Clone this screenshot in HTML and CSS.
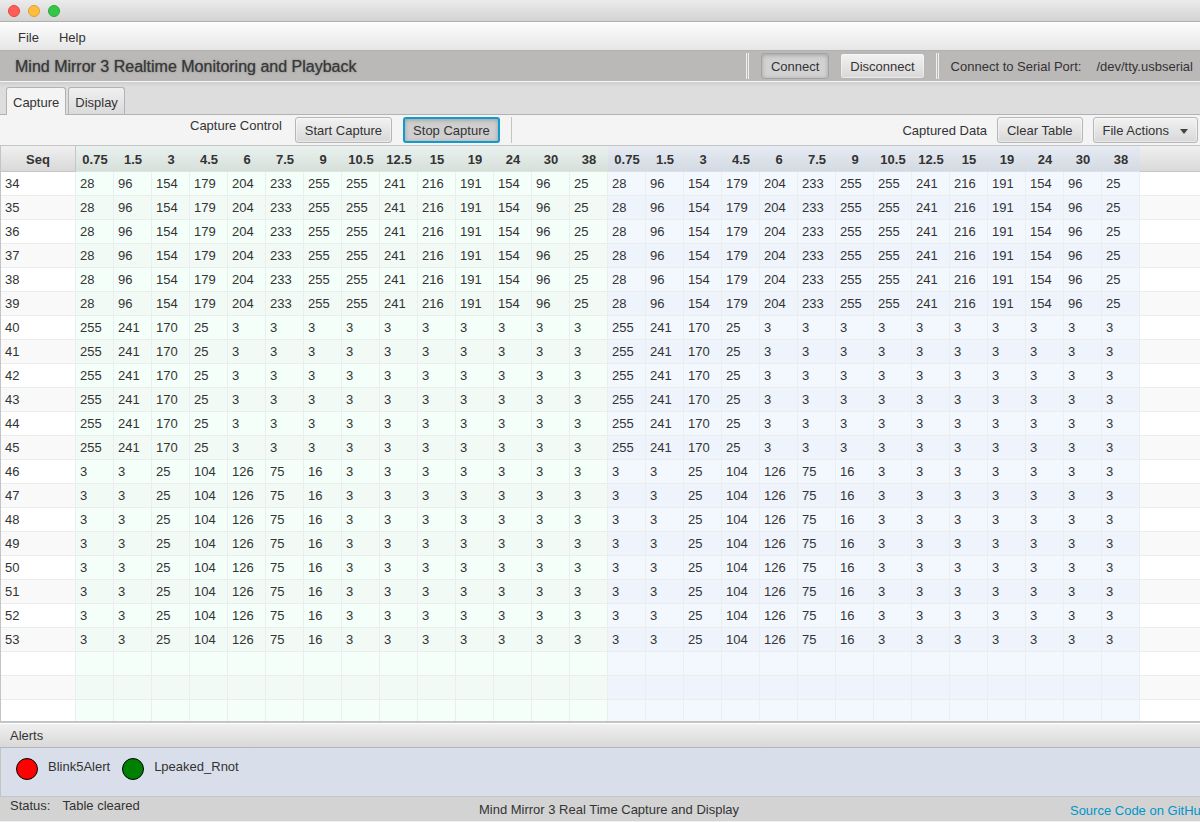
FILE: index.html
```html
<!DOCTYPE html>
<html lang="en">
<head>
<meta charset="utf-8">
<title>Mind Mirror 3</title>
<link rel="stylesheet" href="styles.css">
</head>
<body>
<div class="window">
  <div class="titlebar">
    <button class="light light-close" aria-label="Close"></button>
    <button class="light light-min" aria-label="Minimize"></button>
    <button class="light light-zoom" aria-label="Zoom"></button>
  </div>
  <nav class="menubar">
    <button class="menu">File</button>
    <button class="menu">Help</button>
  </nav>
  <header class="toolbar">
    <h1 class="app-title">Mind Mirror 3 Realtime Monitoring and Playback</h1>
    <div class="toolbar-group">
      <span class="divider"></span>
      <button class="btn btn-pressed">Connect</button>
      <button class="btn">Disconnect</button>
      <span class="divider"></span>
      <span class="port-label">Connect to Serial Port:</span>
      <span class="port-name">/dev/tty.usbserial</span>
    </div>
  </header>
  <div class="tabs" role="tablist">
    <button class="tab tab-active" role="tab" aria-selected="true">Capture</button>
    <button class="tab" role="tab" aria-selected="false">Display</button>
  </div>
  <div class="controls">
    <div class="control-group">
      <span class="control-label">Capture Control</span>
      <button class="btn">Start Capture</button>
      <button class="btn btn-pressed btn-focus">Stop Capture</button>
      <span class="rule"></span>
    </div>
    <div class="data-group">
      <span>Captured Data</span>
      <button class="btn">Clear Table</button>
      <button class="btn btn-menu">File Actions
        <svg class="arrow" viewBox="0 0 8 5"><path d="M0 0H8L4 5Z"/></svg>
      </button>
    </div>
  </div>
  <main class="table-area">
    <table class="grid">
      <colgroup id="cols"><col class="col-seq"></colgroup>
      <thead><tr id="head"><th class="seq">Seq</th></tr></thead>
      <tbody id="rows"></tbody>
    </table>
  </main>
  <section class="alerts">
    <h2 class="alerts-title">Alerts</h2>
    <div class="alerts-body">
      <span class="dot dot-red"></span><span class="alert-name">Blink5Alert</span>
      <span class="dot dot-green"></span><span class="alert-name">Lpeaked_Rnot</span>
    </div>
  </section>
  <footer class="status">
    <div class="status-left"><span>Status:</span><span>Table cleared</span></div>
    <span class="status-mid">Mind Mirror 3 Real Time Capture and Display</span>
    <a class="source" href="#">Source Code on GitHub</a>
  </footer>
</div>
<script src="table.js"></script>
</body>
</html>
```
FILE: styles.css
```css
* { box-sizing: border-box; }
body {
  margin: 0;
  font-family: "Liberation Sans", Arial, sans-serif;
  font-size: 13px;
  line-height: 16px;
  color: #333;
}
button { font: inherit; color: inherit; margin: 0; }
.window {
  display: flex;
  flex-direction: column;
  height: 100vh;
  overflow: hidden;
  background: #f4f4f4;
  border-bottom: 1px solid #efefef;
}
.titlebar {
  display: flex;
  align-items: center;
  gap: 8px;
  flex: none;
  height: 22px;
  padding-left: 8px;
  background: linear-gradient(#ebebeb, #d3d3d3);
  border-bottom: 1px solid #b0b0b0;
}
.light {
  width: 12px;
  height: 12px;
  padding: 0;
  border: 1px solid #e2463f;
  border-radius: 50%;
  background: #ff5f57;
}
.light-min { background: #ffbd3e; border-color: #dfa033; }
.light-zoom { background: #33c748; border-color: #27aa35; }
.menubar {
  display: flex;
  flex: none;
  height: 28px;
  padding: 3px 10px 0;
  background: linear-gradient(#fdfdfd, #e6e6e6);
}
.menu { padding: 0 8px; margin-right: 4px; border: 0; background: none; }
.toolbar {
  display: flex;
  align-items: center;
  flex: none;
  height: 32px;
  padding-left: 15px;
  white-space: nowrap;
  background: #bbb8b8;
  border-top: 1px solid #b3b0b0;
  border-bottom: 1px solid #f6f6f6;
}
.app-title {
  margin: 0;
  padding-top: 2px;
  font-size: 16px;
  line-height: 20px;
  font-weight: 400;
  color: #383838;
  text-shadow: 0 0 1px #666, 0 0 3px #999;
}
.toolbar-group { display: flex; align-items: center; margin-left: auto; padding-right: 7px; }
.divider {
  width: 3px;
  height: 26px;
  margin-right: 12px;
  border-left: 1px solid #f0f0f0;
  border-right: 1px solid #f0f0f0;
}
.toolbar .btn { margin-right: 11px; }
.port-label { margin-right: 15px; padding-top: 2px; }
.port-name { padding-top: 2px; }
.btn {
  height: 26px;
  padding: 2px 9px 0;
  white-space: nowrap;
  border: 1px solid #b6b6b6;
  border-radius: 3px;
  background: linear-gradient(#f2f2f2, #d8d8d8);
  box-shadow: inset 0 0 0 1px rgba(255, 255, 255, .45);
}
.btn-pressed {
  background: #d2d2d2;
  border-color: #a3a3a3;
  box-shadow: inset 0 1px 4px rgba(0, 0, 0, .25);
}
.btn-focus {
  background: #cfcfcf;
  border: 2px solid #0f9bd0;
  padding: 2px 8px 0;
}
.tabs {
  display: flex;
  align-items: flex-end;
  gap: 2px;
  flex: none;
  height: 33px;
  padding-left: 6px;
  background: linear-gradient(#cecece, #dddddd 5px);
  border-bottom: 1px solid #b2b2b2;
}
.tab {
  height: 27px;
  padding: 4px 6px 0;
  border: 1px solid #b2b2b2;
  border-bottom: 0;
  border-radius: 3px 3px 0 0;
  background: linear-gradient(#f0f0f0, #dadada);
}
.tab-active {
  height: 28px;
  padding-top: 3px;
  margin-bottom: -1px;
  background: #f4f4f4;
}
.controls {
  display: flex;
  justify-content: space-between;
  flex: none;
  height: 30px;
  padding: 2px 2px 2px 190px;
}
.control-group { display: flex; gap: 11px; }
.control-label { padding-top: 1px; margin-right: 2px; }
.rule { width: 1px; background: #c3c3c3; }
.data-group { display: flex; align-items: center; gap: 10px; }
.data-group span { padding-top: 2px; }
.btn-menu { display: flex; align-items: center; gap: 11px; }
.arrow { width: 8px; height: 5px; fill: #444; }
.table-area {
  flex: 1;
  min-height: 0;
  overflow: hidden;
  background: #fff;
  border: solid #c4c4c4;
  border-width: 1px 0 2px 1px;
}
.grid {
  width: 100%;
  table-layout: fixed;
  border-collapse: separate;
  border-spacing: 0;
}
.col-seq { width: 75px; }
.col-band { width: 38px; }
.grid th {
  height: 26px;
  padding: 2px 0 0;
  font-weight: 700;
  background: linear-gradient(#f0f0f0, #d9d9d9);
  border-bottom: 1px solid #c6c6c6;
}
.grid th.seq { border-right: 1px solid #c6c6c6; }
.grid th.left { background: linear-gradient(#e9f2ee, #d6dfda); border-bottom-color: #dce5e0; }
.grid th.right { background: linear-gradient(#e6ebf3, #d4dae2); border-bottom-color: #dbe1ea; }
.grid td {
  height: 24px;
  padding: 0 0 0 4px;
  background: #fff;
  border-right: 1px solid #ebeeee;
  border-bottom: 1px solid #ebeded;
}
.grid td.left { background: #f5fffa; }
.grid td.right { background: #f3f8ff; }
.grid tr:nth-child(even) td { background: #f9f9f9; }
.grid tr:nth-child(even) td.left { background: #f1faf5; }
.grid tr:nth-child(even) td.right { background: #eef3fc; }
.grid td.fill { border-right: 0; }
.alerts { flex: none; }
.alerts-title {
  height: 25px;
  margin: 0;
  padding: 4px 10px 0;
  font-size: 13px;
  line-height: 16px;
  font-weight: 400;
  background: linear-gradient(#f0f0f0, #d8d8d8);
  border-top: 1px solid #fff;
  border-bottom: 1px solid #b6b6b6;
}
.alerts-body {
  display: flex;
  height: 49px;
  padding: 10px 15px 0;
  background: #d8dfea;
  border-left: 1px solid #c4c4c4;
  border-bottom: 1px solid #c4c4c4;
}
.dot {
  width: 22px;
  height: 22px;
  margin-right: 10px;
  border: 1px solid #000;
  border-radius: 50%;
}
.dot-red { background: #f00; }
.dot-green { background: #008000; }
.alert-name { padding-top: 1px; margin-right: 12px; }
.status {
  display: grid;
  grid-template-columns: 1fr auto 1fr;
  flex: none;
  height: 24px;
  margin-right: -18px;
  padding: 1px 10px 0;
  white-space: nowrap;
  background: #d3d3d3;
}
.status-left { display: flex; gap: 12px; }
.status-mid { padding-top: 4px; }
.source {
  justify-self: end;
  padding-top: 5px;
  color: #0096c9;
  text-decoration: none;
}
```
FILE: table.js
```js
const bands = ["0.75", "1.5", "3", "4.5", "6", "7.5", "9", "10.5", "12.5", "15", "19", "24", "30", "38"];
const patterns = [
  { until: 39, values: [28, 96, 154, 179, 204, 233, 255, 255, 241, 216, 191, 154, 96, 25] },
  { until: 45, values: [255, 241, 170, 25, 3, 3, 3, 3, 3, 3, 3, 3, 3, 3] },
  { until: 53, values: [3, 3, 25, 104, 126, 75, 16, 3, 3, 3, 3, 3, 3, 3] }
];
const emptyRows = 3;
const cols = document.getElementById("cols");
const head = document.getElementById("head");
const body = document.getElementById("rows");

function add(parent, tag, className, text) {
  const node = document.createElement(tag);
  if (className) node.className = className;
  if (text !== undefined) node.textContent = text;
  parent.appendChild(node);
  return node;
}

for (const side of ["left", "right"]) {
  for (const band of bands) {
    add(cols, "col", "col-band");
    add(head, "th", side, band);
  }
}
add(cols, "col");
add(head, "th", "fill");

for (let seq = 34; seq <= 53 + emptyRows; seq++) {
  const pattern = patterns.find(p => seq <= p.until);
  const row = add(body, "tr");
  add(row, "td", "seq", pattern ? seq : "");
  for (const side of ["left", "right"]) {
    bands.forEach((_, i) => add(row, "td", side, pattern ? pattern.values[i] : ""));
  }
  add(row, "td", "fill");
}
```
